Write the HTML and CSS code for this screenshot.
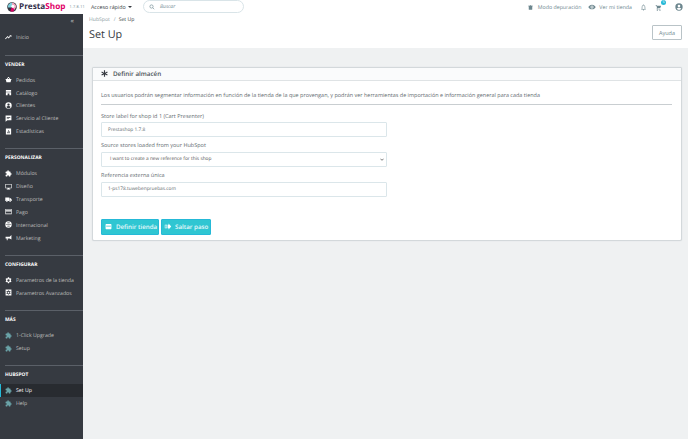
FILE: index.html
```html
<!DOCTYPE html>
<html lang="es">
<head>
<meta charset="utf-8">
<title>Set Up</title>
<link rel="stylesheet" href="styles.css">
</head>
<body>
<svg class="defs" aria-hidden="true">
  <symbol id="puzzle" viewBox="0 0 24 24"><path d="M20.5 11H19V7a2 2 0 0 0-2-2h-4V3.500a2.500 2.500 0 0 0-5 0V5H4a2 2 0 0 0-2 2v3.800h1.500a2.700 2.700 0 0 1 0 5.400H2V20a2 2 0 0 0 2 2h3.800v-1.500a2.700 2.700 0 0 1 5.400 0V22H17a2 2 0 0 0 2-2v-4h1.500a2.500 2.500 0 0 0 0-5z"/></symbol>
</svg>
<header class="topbar">
  <div class="logo">
    <svg class="logo-mark" viewBox="0 0 24 24"><circle cx="12" cy="12" r="11.500" fill="#34353f"/><path d="M2 13a10 10 0 0 1 10-11v11z" fill="#7fd0dc"/><path d="M12 2a10 10 0 0 1 10 10l-5 8-5-7z" fill="#f0a6c0"/><circle cx="14" cy="10" r="3.600" fill="#fff"/><path d="M8 23l3-10 6 3-1 7z" fill="#df0067"/></svg>
    <span class="logo-text">Presta<b>Shop</b></span>
    <span class="version">1.7.8.11</span>
  </div>
  <div class="quick">Acceso rápido <i class="caret"></i></div>
  <div class="search">
    <svg class="ic-search" viewBox="0 0 24 24"><circle cx="10" cy="10" r="6.500"/><path d="M15 15l6 6"/></svg>
    <span>Buscar</span>
  </div>
  <div class="top-right">
    <span class="top-link">
      <svg class="ic" viewBox="0 0 24 24"><path d="M9 4h6v2l2 1 2-2 1 1-2 3v9a2 2 0 0 1-2 2H8a2 2 0 0 1-2-2V9L4 6l1-1 2 2 2-1z"/></svg>
      Modo depuración
    </span>
    <span class="top-link link-store">
      <svg class="ic ic-eye" viewBox="0 0 24 24"><path d="M12 5C7 5 3 8 1 12c2 4 6 7 11 7s9-3 11-7c-2-4-6-7-11-7zm0 11.500a4.500 4.500 0 1 1 0-9 4.500 4.500 0 0 1 0 9z"/><circle cx="12" cy="12" r="2.500"/></svg>
      Ver mi tienda
    </span>
    <svg class="ic ic-bell" viewBox="0 0 24 24"><path d="M12 2a2 2 0 0 0-2 2c-3 1-4 3-4 6v6l-2 2v1h16v-1l-2-2v-6c0-3-1-5-4-6a2 2 0 0 0-2-2zm-4 15v-7c0-2.500 1.500-4.500 4-4.500s4 2 4 4.500v7zm2 3a2 2 0 0 0 4 0z"/></svg>
    <span class="cart">
      <svg class="ic ic-cart" viewBox="0 0 24 24"><path d="M2 3h4l1 3h14l-3 8H9l-1 2h10v2H5l2-4L4.500 5H2zM8 19a2 2 0 1 1 0 4 2 2 0 0 1 0-4zm9 0a2 2 0 1 1 0 4 2 2 0 0 1 0-4z"/></svg>
      <span class="badge">5</span>
    </span>
    <svg class="ic ic-user" viewBox="0 0 24 24"><path d="M12 1a11 11 0 1 0 0 22 11 11 0 0 0 0-22zm0 4a4 4 0 1 1 0 8 4 4 0 0 1 0-8zm0 16a9 9 0 0 1-7-3.400c1-2.400 4-3.600 7-3.600s6 1.200 7 3.600A9 9 0 0 1 12 21z"/></svg>
  </div>
</header>
<div class="shell">
  <nav class="sidebar">
    <div class="collapse">«</div>
    <a class="item first"><svg class="ni" viewBox="0 0 24 24"><path d="M2 18l7-7 4 4 6-7 3 2V4h-7l2 2-4 5-4-4-9 9z"/></svg>Inicio</a>
    <hr class="rule">
    <h3 class="sec">VENDER</h3>
    <a class="item"><svg class="ni" viewBox="0 0 24 24"><path d="M2 10h4l5-7 2 1-4 6h6l-4-6 2-1 5 7h4v3h-1l-2 8H5l-2-8H2z"/></svg>Pedidos</a>
    <a class="item"><svg class="ni" viewBox="0 0 24 24"><path d="M3 3h18v6H3zM3 11h18v10h-6v-6H9v6H3z"/></svg>Catálogo</a>
    <a class="item"><svg class="ni" viewBox="0 0 24 24"><path d="M12 1a11 11 0 1 0 0 22 11 11 0 0 0 0-22zm0 4a4 4 0 1 1 0 8 4 4 0 0 1 0-8zm0 16a9 9 0 0 1-7-3.400c1-2.400 4-3.600 7-3.600s6 1.200 7 3.600A9 9 0 0 1 12 21z"/></svg>Clientes</a>
    <a class="item"><svg class="ni" viewBox="0 0 24 24"><path d="M2 2h20v16H8l-6 5zM6 7v2h12V7zm0 4v2h8v-2z"/></svg>Servicio al Cliente</a>
    <a class="item"><svg class="ni" viewBox="0 0 24 24"><path d="M3 2h18v20H3zM7 13v5h2v-5zm4-6v11h2V7zm4 4v7h2v-7z"/></svg>Estadísticas</a>
    <hr class="rule">
    <h3 class="sec">PERSONALIZAR</h3>
    <a class="item"><svg class="ni"><use href="#puzzle"/></svg>Módulos</a>
    <a class="item"><svg class="ni" viewBox="0 0 24 24"><path d="M1 3h22v15h-8v2h3v2H6v-2h3v-2H1zm2 2v11h18V5z"/></svg>Diseño</a>
    <a class="item"><svg class="ni" viewBox="0 0 24 24"><path d="M1 5h14v12H9a3 3 0 0 0-5 0H1zm15 3h4l3 4v5h-2a3 3 0 0 0-5 0zM6.500 16.500a2 2 0 1 1 0 4 2 2 0 0 1 0-4zm11 0a2 2 0 1 1 0 4 2 2 0 0 1 0-4z"/></svg>Transporte</a>
    <a class="item"><svg class="ni" viewBox="0 0 24 24"><path d="M1 3h22v18H1zm2 2v3h18V5zm0 7v7h18v-7z"/></svg>Pago</a>
    <a class="item"><svg class="ni" viewBox="0 0 24 24"><path d="M12 1a11 11 0 1 0 0 22 11 11 0 0 0 0-22zM3 11h18v2H3zM8 5h8v3H8zm0 11h8v3H8z"/></svg>Internacional</a>
    <a class="item"><svg class="ni" viewBox="0 0 24 24"><path d="M22 3v16l-6-4H9v6H6v-6H2V9h14z"/></svg>Marketing</a>
    <hr class="rule">
    <h3 class="sec">CONFIGURAR</h3>
    <a class="item"><svg class="ni" viewBox="0 0 24 24"><path d="M10 1h4l1 3 2 1 3-1 2 3-2 3v2l2 3-2 3-3-1-2 1-1 3h-4l-1-3-2-1-3 1-2-3 2-3v-2L2 7l2-3 3 1 2-1zm2 7a4 4 0 1 0 0 8 4 4 0 0 0 0-8z"/></svg>Parametros de la tienda</a>
    <a class="item"><svg class="ni" viewBox="0 0 24 24"><path d="M2 2h20v20H2zm8 3v2l-2 1-2-1-1 3 2 1v2l-2 1 1 3 2-1 2 1v2h4v-2l2-1 2 1 1-3-2-1v-2l2-1-1-3-2 1-2-1V5zm2 4a3 3 0 1 1 0 6 3 3 0 0 1 0-6z"/></svg>Parametros Avanzados</a>
    <hr class="rule">
    <h3 class="sec">MÁS</h3>
    <a class="item plug"><svg class="ni"><use href="#puzzle"/></svg>1-Click Upgrade</a>
    <a class="item plug"><svg class="ni"><use href="#puzzle"/></svg>Setup</a>
    <hr class="rule">
    <h3 class="sec">HUBSPOT</h3>
    <a class="item plug active"><svg class="ni"><use href="#puzzle"/></svg>Set Up</a>
    <a class="item plug"><svg class="ni"><use href="#puzzle"/></svg>Help</a>
  </nav>
  <main class="main">
    <section class="page-head">
      <div class="crumbs"><span class="crumb-link">HubSpot</span><span class="crumb-sep">/</span><span>Set Up</span></div>
      <div class="title-row">
        <h1>Set Up</h1>
        <button class="help" type="button">Ayuda</button>
      </div>
    </section>
    <section class="panel">
      <div class="panel-head">
        <svg class="asterisk" viewBox="0 0 24 24"><path d="M10 1h4v8l7-4 2 3.500-7 3.500 7 3.500-2 3.500-7-4v8h-4v-8l-7 4-2-3.500L8 12 1 8.500 3 5l7 4z"/></svg>
        Definir almacén
      </div>
      <div class="panel-body">
        <p class="intro">Los usuarios podrán segmentar información en función de la tienda de la que provengan, y podrán ver herramientas de importación e información general para cada tienda</p>
        <label class="field-label">Store label for shop id 1 (Cart Presenter)</label>
        <div class="field">Prestashop 1.7.8</div>
        <label class="field-label">Source stores loaded from your HubSpot</label>
        <div class="field select"><span>I want to create a new reference for this shop</span><svg class="chev" viewBox="0 0 10 6"><path d="M1 1l4 4 4-4"/></svg></div>
        <label class="field-label">Referencia externa única</label>
        <div class="field">1-ps178.tuwebenpruebas.com</div>
        <div class="actions">
          <button class="btn" type="button"><svg class="bi" viewBox="0 0 24 24"><path d="M4 3h16a2 2 0 0 1 2 2v14a2 2 0 0 1-2 2H4a2 2 0 0 1-2-2V5a2 2 0 0 1 2-2zm0 6v3h16V9z" fill-rule="evenodd"/></svg>Definir tienda</button>
          <button class="btn btn-skip" type="button"><svg class="bi" viewBox="0 0 24 24"><path d="M1 6h8v12H1zm2 2v8h4V8zm8-2h3V2l9 10-9 10v-4h-3z" fill-rule="evenodd"/></svg>Saltar paso</button>
        </div>
      </div>
    </section>
  </main>
</div>
</body>
</html>
```
FILE: styles.css
```css
* { box-sizing: border-box; }
html, body { margin: 0; padding: 0; height: 100%; overflow: hidden; }
body { font-family: "Open Sans", sans-serif; color: #6c868e; background: #eff1f2; width: 688px; height: 439px; text-rendering: geometricPrecision; }
.defs { display: none; }
button { text-rendering: geometricPrecision; }

.topbar { height: 14px; background: #fff; display: flex; align-items: center; position: relative; }
.logo { display: flex; align-items: center; width: 90px; padding-left: 7px; flex: none; }
.logo-mark { width: 10px; height: 10px; flex: none; }
.logo-text { font-size: 8.200px; font-weight: 700; color: #34304a; margin-left: 2px; line-height: 14px; }
.logo-text b { font-weight: 700; color: #df0067; }
.version { font-size: 3.800px; margin-left: 4px; color: #6c868e; letter-spacing: .2px; white-space: nowrap; }
.quick { font-size: 5.300px; color: #363a41; width: 52px; flex: none; white-space: nowrap; margin-left: 1px; }
.caret { display: inline-block; border: 2px solid transparent; border-top-color: #363a41; border-bottom: 0; vertical-align: 1px; margin-left: 1px; }
.search { width: 101px; height: 13px; margin-top: -1px; border: 1px solid #d9e4e8; border-radius: 7px; display: flex; align-items: center; padding-left: 5px; font-size: 5px; font-style: italic; color: #6c868e; flex: none; }
.ic-search { width: 6px; height: 6px; fill: none; stroke: #6c868e; stroke-width: 2.500; margin-right: 5px; }
.top-right { margin-left: auto; display: flex; align-items: center; padding-right: 5px; }
.top-link { display: flex; align-items: center; font-size: 5.250px; color: #6c868e; margin-right: 7px; white-space: nowrap; }
.link-store { margin-right: 5px; }
.ic { width: 7px; height: 7px; fill: #6c868e; flex: none; }
.top-link .ic { margin-right: 4px; }
.top-link .ic-eye { width: 8px; height: 8px; margin-right: 3px; }
.ic-bell { margin-left: 3px; }
.cart { position: relative; display: flex; margin: 0 13px 0 8px; }
.badge { position: absolute; top: -4px; right: -4px; width: 5px; height: 5px; border-radius: 50%; background: #25b9d7; color: #fff; font-size: 3.500px; line-height: 5px; text-align: center; }
.ic-user { width: 8px; height: 8px; }

.shell { display: flex; height: 425px; }
.sidebar { width: 83px; flex: none; background: #363a41; color: #bebebe; }
.collapse { height: 16px; font-size: 7px; line-height: 16px; text-align: right; padding-right: 9px; color: #bebebe; }
.item { display: flex; align-items: center; height: 12.850px; padding-left: 5px; font-size: 5.200px; color: #bebebe; white-space: nowrap; }
.item.first { margin-top: 1px; }
.ni { width: 7px; height: 7px; fill: #fff; margin-right: 4px; flex: none; }
.plug .ni { fill: #6aa3a8; }
.active { background: #282b30; border-left: 1px solid #25b9d7; padding-left: 4px; color: #fff; }
.rule { border: 0; height: 1px; background: #5b6068; margin: 10.800px 0 0 5px; }
.sec { margin: 0; height: 17.700px; padding: 6px 0 0 5px; font-size: 4.900px; line-height: 7px; font-weight: 700; color: #fff; }

.main { flex: 1; min-width: 0; }
.page-head { height: 34px; background: #fff; padding: 2px 6px 0 6px; }
.crumbs { font-size: 5.100px; line-height: 8px; color: #363a41; display: flex; }
.crumb-link { color: #8a9ba1; }
.crumb-sep { margin: 0 3px 0 4px; color: #8a9ba1; }
.title-row { display: flex; justify-content: space-between; align-items: flex-start; margin-top: 1px; }
h1 { margin: 1.500px 0 0; font-size: 10.800px; line-height: 16px; font-weight: 400; color: #363a41; }
.help { width: 30px; height: 15px; border: 1px solid #b9c3c7; border-radius: 1px; background: #fff; color: #6c868e; font: 400 5.500px "Open Sans", sans-serif; padding: 0; }

.panel { margin: 19px 6px 0 9px; height: 174px; background: #fff; border: 1px solid #d3d8db; border-radius: 2px; box-shadow: 0 0 1px #c8ced0; }
.panel-head { height: 13px; background: #fafbfc; border-bottom: 1px solid #dfe3e5; display: flex; align-items: center; padding: 0 0 2px 8px; font-size: 6.300px; font-weight: 600; color: #4b5257; }
.asterisk { width: 7px; height: 7px; fill: #363a41; margin-right: 5px; }
.panel-body { padding: 10px 9px 0 8px; }
.intro { margin: 0; font-size: 5.470px; line-height: 8px; padding-bottom: 5px; border-bottom: 1px solid #c9ced1; white-space: nowrap; color: #5f6b70; }
.field-label { display: block; margin-top: 4px; font-size: 5.500px; line-height: 8px; color: #5f6b70; }
.panel-body .intro + .field-label { margin-top: 6.500px; }
.field { width: 286px; height: 15px; margin-top: 2.700px; border: 1px solid #dbe6ea; border-radius: 1px; background: #fff; display: flex; align-items: center; padding-left: 6px; font-size: 4.800px; color: #5f6b70; }
.select { justify-content: space-between; padding-left: 8px; padding-right: 2px; color: #555; }
.chev { width: 4px; height: 3px; fill: none; stroke: #444; stroke-width: 1.800; }
.actions { display: flex; gap: 2px; margin-top: 22px; }
.btn { height: 16px; width: 58px; padding: 0 0 0 3px; background: #2fc6d2; border: 1px solid #25b9d7; border-radius: 1px; color: #e6f9fb; font: 600 6.200px "Open Sans", sans-serif; display: flex; align-items: center; white-space: nowrap; }
.btn-skip { width: 50px; padding-left: 2px; }
.bi { width: 7px; height: 7px; fill: #fff; margin-right: 4px; flex: none; }
.btn-skip .bi { width: 8px; margin-right: 3px; }
```
